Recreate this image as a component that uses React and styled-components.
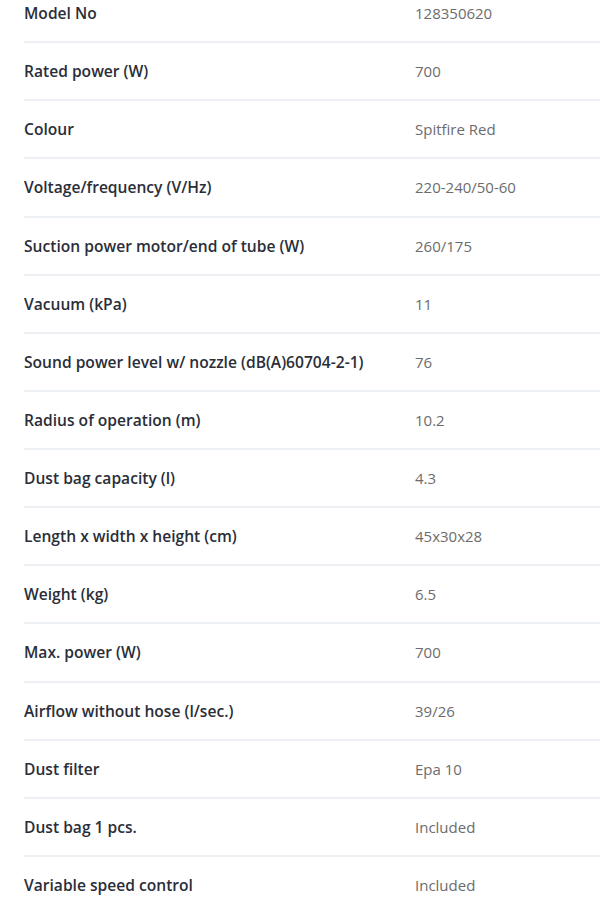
import styled, { createGlobalStyle } from 'styled-components';

const GlobalStyle = createGlobalStyle`
    html, body {
        margin: 0;
        padding: 0;
        background: #ffffff;
        overflow: hidden;
    }
`;

const specs = [
    ['Model No', '128350620'],
    ['Rated power (W)', '700'],
    ['Colour', 'Spitfire Red'],
    ['Voltage/frequency (V/Hz)', '220-240/50-60'],
    ['Suction power motor/end of tube (W)', '260/175'],
    ['Vacuum (kPa)', '11'],
    ['Sound power level w/ nozzle (dB(A)60704-2-1)', '76'],
    ['Radius of operation (m)', '10.2'],
    ['Dust bag capacity (l)', '4.3'],
    ['Length x width x height (cm)', '45x30x28'],
    ['Weight (kg)', '6.5'],
    ['Max. power (W)', '700'],
    ['Airflow without hose (l/sec.)', '39/26'],
    ['Dust filter', 'Epa 10'],
    ['Dust bag 1 pcs.', 'Included'],
    ['Variable speed control', 'Included'],
];

const Page = styled.div`
    width: 600px;
    height: 905px;
    overflow: hidden;
    font-family: "Open Sans", "Noto Sans", sans-serif;
`;

const Table = styled.div`
    margin-top: -15px;
    padding-left: 24px;
`;

const Row = styled.div`
    display: grid;
    grid-template-columns: 391px 1fr;
    align-items: center;
    height: 56.14px;
    border-bottom: 2px solid #edf0f4;
`;

const Label = styled.div`
    font-size: 15.6px;
    font-weight: 600;
    color: #2a2e39;
    white-space: nowrap;
`;

const Value = styled.div`
    font-size: 15px;
    font-weight: 400;
    color: #6c6c6c;
    white-space: nowrap;
`;

const App = () => {
    return (
    <Page>
        <GlobalStyle />
        <Table>
            {specs.map(([label, value]) => (
                <Row key={label}>
                    <Label>{label}</Label>
                    <Value>{value}</Value>
                </Row>
            ))}
        </Table>
    </Page>
    )
};

export default App;
